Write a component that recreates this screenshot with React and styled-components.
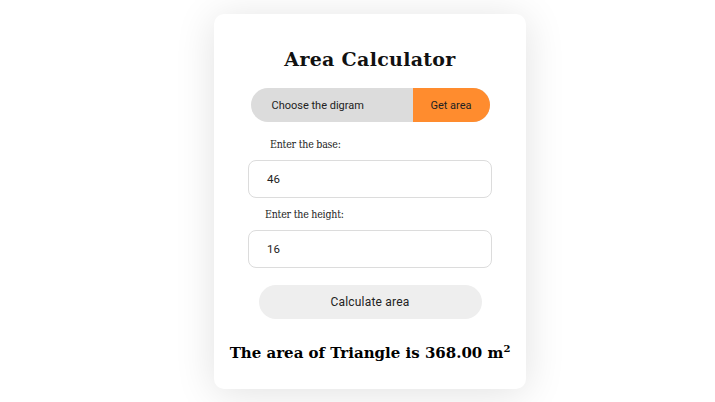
import React from "react";
import styled, { createGlobalStyle } from "styled-components";

const Global = createGlobalStyle`
  html, body { margin: 0; padding: 0; background: #ffffff; }
  body { width: 715px; height: 402px; overflow: hidden; }
`;

const Page = styled.div`
  display: flex;
  justify-content: center;
  padding-top: 14px;
  padding-left: 25px;
  width: 715px;
  height: 402px;
  box-sizing: border-box;
`;

const Card = styled.div`
  width: 312px;
  height: 375px;
  box-sizing: border-box;
  background: #fff;
  border-radius: 10px;
  box-shadow: 0 4px 40px rgba(0, 0, 0, 0.12);
  display: flex;
  flex-direction: column;
  align-items: center;
  padding-top: 32px;
`;

const Title = styled.h1`
  margin: 0;
  font-family: "DejaVu Serif", serif;
  font-weight: bold;
  font-size: 19px;
  letter-spacing: 0.3px;
  color: #111;
  line-height: 26px;
`;

const Toggle = styled.div`
  margin-top: 16px;
  width: 239px;
  height: 34px;
  display: flex;
  border-radius: 17px;
  overflow: hidden;
  background: #dcdcdc;
`;

const ToggleItem = styled.div`
  flex: ${(p) => (p.$active ? "0 0 77px" : "1")};
  display: flex;
  align-items: center;
  justify-content: ${(p) => (p.$active ? "center" : "flex-start")};
  padding-left: ${(p) => (p.$active ? "0" : "21px")};
  background: ${(p) => (p.$active ? "#ff8c2e" : "transparent")};
  font-family: Roboto, sans-serif;
  font-size: 11px;
  color: #222;
`;

const Field = styled.div`
  margin-top: ${(p) => p.$mt}px;
  width: 244px;
  display: flex;
  flex-direction: column;
`;

const Label = styled.label`
  font-family: "DejaVu Serif Condensed", "DejaVu Serif", serif;
  font-size: 10.5px;
  letter-spacing: -0.2px;
  color: #222;
  padding-left: ${(p) => p.$indent}px;
  line-height: 14px;
  margin-bottom: 9px;
`;

const Input = styled.div`
  height: 38px;
  box-sizing: border-box;
  border: 1px solid #dcdcdc;
  border-radius: 8px;
  display: flex;
  align-items: center;
  padding-left: 18px;
  font-family: Roboto, sans-serif;
  font-size: 11.5px;
  color: #222;
`;

const Button = styled.div`
  margin-top: 17px;
  width: 223px;
  height: 34px;
  border-radius: 17px;
  background: #eeeeee;
  display: flex;
  align-items: center;
  justify-content: center;
  font-family: Roboto, sans-serif;
  font-size: 12px;
  color: #222;
  letter-spacing: 0.2px;
`;

const Result = styled.div`
  margin-top: 25px;
  font-family: "DejaVu Serif", serif;
  font-weight: bold;
  font-size: 15px;
  color: #000;
  sup {
    font-size: 10px;
    vertical-align: 6px;
    line-height: 0;
  }
`;

export default function App() {
  return (
    <>
      <Global />
      <Page>
        <Card>
          <Title>Area Calculator</Title>
          <Toggle>
            <ToggleItem>Choose the digram</ToggleItem>
            <ToggleItem $active>Get area</ToggleItem>
          </Toggle>
          <Field $mt={15}>
            <Label $indent={22}>Enter the base:</Label>
            <Input>46</Input>
          </Field>
          <Field $mt={9}>
            <Label $indent={17}>Enter the height:</Label>
            <Input>16</Input>
          </Field>
          <Button>Calculate area</Button>
          <Result>
            The area of Triangle is 368.00 m<sup>2</sup>
          </Result>
        </Card>
      </Page>
    </>
  );
}
